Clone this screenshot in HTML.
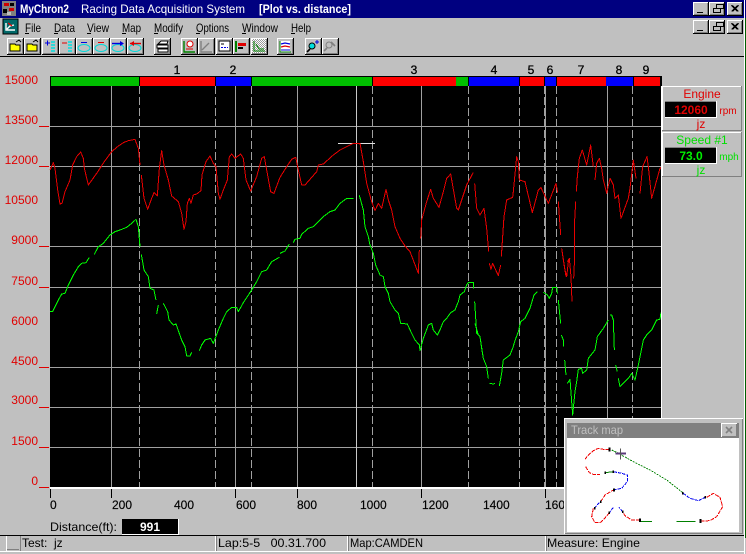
<!DOCTYPE html>
<html>
<head>
<meta charset="utf-8">
<style>
html,body{margin:0;padding:0;background:#c0c0c0;width:746px;height:554px;overflow:hidden}
svg{display:block;position:absolute;left:0;top:0}
text{font-family:"Liberation Sans",sans-serif}
</style>
</head>
<body>
<svg width="746" height="554" viewBox="0 0 746 554" xmlns="http://www.w3.org/2000/svg">
<defs>
<g id="b" shape-rendering="crispEdges"><rect width="17" height="17" fill="#000"/><rect width="16" height="16" fill="#fff"/><rect x="1" y="1" width="15" height="15" fill="#808080"/><rect x="1" y="1" width="14" height="14" fill="#c0c0c0"/></g>
<g id="w" shape-rendering="crispEdges"><rect width="16" height="14" fill="#000"/><rect width="15" height="13" fill="#fff"/><rect x="1" y="1" width="14" height="12" fill="#808080"/><rect x="1" y="1" width="13" height="11" fill="#c0c0c0"/></g>
<pattern id="dith" width="2" height="2" patternUnits="userSpaceOnUse"><rect width="2" height="2" fill="#fff"/><rect width="1" height="1" fill="#999"/><rect x="1" y="1" width="1" height="1" fill="#999"/></pattern>
</defs>

<rect width="746" height="554" fill="#c0c0c0"/>

<!-- title bar -->
<rect width="746" height="18" fill="#000080"/>
<rect x="2" y="1" width="14" height="15" fill="#808080"/>
<rect x="4" y="3" width="5" height="3" fill="#d00000"/><rect x="9" y="8" width="5" height="3" fill="#d00000"/><rect x="3" y="9" width="4" height="4" fill="#000"/><rect x="10" y="3" width="4" height="3" fill="#000"/><rect x="7" y="12" width="4" height="3" fill="#c0c0c0"/>
<g fill="#fff" font-size="12" font-weight="bold">
<text x="20" y="13" textLength="49" lengthAdjust="spacingAndGlyphs">MyChron2</text>
<text x="81" y="13" textLength="164" lengthAdjust="spacingAndGlyphs" font-weight="normal">Racing Data Acquisition System</text>
<text x="259" y="13" textLength="92" lengthAdjust="spacingAndGlyphs">[Plot vs. distance]</text>
</g>
<use href="#w" x="693" y="2"/><use href="#w" x="709" y="2"/><use href="#w" x="727" y="2"/>
<use href="#w" x="693" y="20"/><use href="#w" x="709" y="20"/><use href="#w" x="727" y="20"/>
<g shape-rendering="crispEdges" fill="none" stroke="#000">
<path d="M697 12.5h6M713.5 8.5h7v4h-7zM716.5 8v-3.5h7v4h-3M697 30.5h6M713.5 26.5h7v4h-7zM716.5 26v-3.5h7v4h-3"/>
<path d="M731.5 5.5l6 6M732.5 5.5l6 6M737.5 5.5l-6 6M738.5 5.5l-6 6M731.5 23.5l6 6M732.5 23.5l6 6M737.5 23.5l-6 6M738.5 23.5l-6 6"/>
</g>

<!-- menu bar -->
<rect x="3" y="19" width="15" height="15" fill="#006868" stroke="#000" stroke-width="1"/>
<path d="M6 23v7h9M7 29l3-3 4-1" fill="none" stroke="#fff" stroke-width="1.4"/><path d="M8 23l4 3" stroke="#e00000" stroke-width="1.2"/>
<g fill="#000" font-size="12">
<text x="25" y="32" textLength="16" lengthAdjust="spacingAndGlyphs">File</text>
<text x="54" y="32" textLength="21" lengthAdjust="spacingAndGlyphs">Data</text>
<text x="87" y="32" textLength="22" lengthAdjust="spacingAndGlyphs">View</text>
<text x="122" y="32" textLength="19" lengthAdjust="spacingAndGlyphs">Map</text>
<text x="154" y="32" textLength="29" lengthAdjust="spacingAndGlyphs">Modify</text>
<text x="196" y="32" textLength="33" lengthAdjust="spacingAndGlyphs">Options</text>
<text x="242" y="32" textLength="36" lengthAdjust="spacingAndGlyphs">Window</text>
<text x="291" y="32" textLength="20" lengthAdjust="spacingAndGlyphs">Help</text>
</g>
<g stroke="#000" shape-rendering="crispEdges"><path d="M25 33.5h4M54 33.5h4M87 33.5h4M122 33.5h4M154 33.5h4M196 33.5h4M242 33.5h4M291 33.5h4"/></g>

<!-- toolbar -->
<g>
<use href="#b" x="7" y="38"/><use href="#b" x="24" y="38"/><use href="#b" x="42" y="38"/><use href="#b" x="59" y="38"/><use href="#b" x="76" y="38"/><use href="#b" x="93" y="38"/><use href="#b" x="110" y="38"/><use href="#b" x="127" y="38"/>
<use href="#b" x="154" y="38"/>
<use href="#b" x="181" y="38"/><use href="#b" x="198" y="38"/><use href="#b" x="216" y="38"/><use href="#b" x="233" y="38"/><use href="#b" x="251" y="38"/>
<use href="#b" x="277" y="38"/>
<use href="#b" x="305" y="38"/><use href="#b" x="322" y="38"/>
</g>
<!-- open icons -->
<path d="M10 44h5l1 1h4v6H10z" fill="#ffff00" stroke="#000"/><path d="M27 44h5l1 1h4v6H27z" fill="#ffff00" stroke="#000"/>
<path d="M16 42l3-2 2 2M33 42l3-2 2 2" fill="none" stroke="#000"/>
<!-- add/remove lines -->
<path d="M45 43h5M47.5 40.5v5" stroke="#0000e0" stroke-width="1"/>
<path d="M62 43h5" stroke="#e00000" stroke-width="1"/>
<path d="M51 42h4M51 45h4M51 48h4M51 51h4M68 42h4M68 45h4M68 48h4M68 51h4" stroke="#00e0e0" stroke-width="1.6"/>
<!-- loops -->
<g fill="none" stroke="#00d8d8">
<ellipse cx="84" cy="48" rx="6" ry="3.5"/><ellipse cx="101" cy="48" rx="6" ry="3.5"/><ellipse cx="118" cy="48" rx="6" ry="3.5"/><ellipse cx="135" cy="48" rx="6" ry="3.5"/>
</g>
<path d="M81 42.5h6" stroke="#0000e0"/><path d="M98 42.5h6" stroke="#e00000"/>
<path d="M112 43.5h11" stroke="#0000e0" stroke-width="1.4"/><path d="M120 41l4 2.5-4 2.5z" fill="#0000e0"/>
<path d="M130 43.5h11" stroke="#e00000" stroke-width="1.4"/><path d="M134 41l-4 2.5 4 2.5z" fill="#e00000"/>
<!-- printer -->
<path d="M158 44l3-3h7l-1 3zM157 45h11v3h-11zM158 49h10v3h-10z" fill="#fff" stroke="#000"/>
<!-- chart buttons -->
<path d="M184 41v11h11" fill="none" stroke="#008000" stroke-width="1.4"/><circle cx="190" cy="44" r="3" fill="#fff" stroke="#e00000"/><path d="M186 49h7" stroke="#e00000"/>
<path d="M201 41v11h11M202 50l7-7" fill="none" stroke="#808080" stroke-width="1.4"/>
<rect x="219" y="41" width="11" height="10" fill="#fff" stroke="#000"/><path d="M221 47.5h7" stroke="#0000e0" stroke-dasharray="2 1"/><path d="M221 44h3" stroke="#000"/>
<path d="M236 41v11" stroke="#008000" stroke-width="2"/><rect x="238" y="43" width="8" height="3" fill="#e00000"/><rect x="238" y="47" width="5" height="2" fill="#000"/>
<rect x="252" y="39" width="14" height="14" fill="url(#dith)"/><path d="M254 41v10h11M256 44l3 5h5" fill="none" stroke="#008000"/>
<path d="M280 41h10v11h-10z" fill="#fff"/><path d="M280 41v11h11" fill="none" stroke="#008000"/><path d="M281 44l4-1 5 1" fill="none" stroke="#0000e0" stroke-width="1.2"/><path d="M281 47l4-1 5 1" fill="none" stroke="#e00000" stroke-width="1.2"/><path d="M281 50h9" stroke="#0000e0"/>
<circle cx="312" cy="46" r="3" fill="#00e0e0" stroke="#000"/><path d="M310 49l-3 3" stroke="#000" stroke-width="1.6"/><path d="M315 42h4M317 40v4" stroke="#0000e0"/>
<circle cx="329" cy="45" r="3" fill="none" stroke="#808080"/><path d="M327 48l-3 3M331 42l4 4" stroke="#808080" stroke-width="1.6"/>

<!-- separator -->
<rect x="0" y="56" width="744" height="1" fill="#000"/>

<!-- colour bar -->
<g shape-rendering="crispEdges">
<rect x="50" y="76" width="612" height="11" fill="#000"/>
<rect x="51" y="77" width="88" height="9" fill="#00c000"/>
<rect x="140" y="77" width="75" height="9" fill="#ff0000"/>
<rect x="216" y="77" width="35" height="9" fill="#0000ff"/>
<rect x="252" y="77" width="120" height="9" fill="#00c000"/>
<rect x="373" y="77" width="83" height="9" fill="#ff0000"/>
<rect x="456" y="77" width="12" height="9" fill="#00c000"/>
<rect x="469" y="77" width="50" height="9" fill="#0000ff"/>
<rect x="520" y="77" width="24" height="9" fill="#ff0000"/>
<rect x="545" y="77" width="11" height="9" fill="#0000ff"/>
<rect x="557" y="77" width="49" height="9" fill="#ff0000"/>
<rect x="606" y="77" width="27" height="9" fill="#0000ff"/>
<rect x="634" y="77" width="26" height="9" fill="#ff0000"/>
</g>
<g font-size="12" fill="#000" text-anchor="middle" stroke="#000" stroke-width=".3">
<text x="177" y="74">1</text><text x="233" y="74">2</text><text x="414" y="74">3</text><text x="494" y="74">4</text><text x="531" y="74">5</text><text x="550" y="74">6</text><text x="581" y="74">7</text><text x="619" y="74">8</text><text x="646" y="74">9</text>
</g>

<!-- chart area -->
<rect x="50" y="86" width="611" height="401" fill="#000" shape-rendering="crispEdges"/>
<g stroke="#a0a0a0" stroke-width="1" shape-rendering="crispEdges">
<path d="M50 126.5h611M50 166.5h611M50 246.5h611M50 287.5h611M50 367.5h611M50 407.5h611M50 447.5h611"/>
<path d="M111.5 86v401M235.5 86v401M297.5 86v401M356.5 86v401M421.5 86v401M545.5 86v401M607.5 86v401"/>
<path stroke-dasharray="8 3" d="M139.5 86v401M215.5 86v401M251.5 86v401M372.5 86v401M468.5 86v401M519.5 86v401M544.5 86v401M556.5 86v401M632.5 86v401"/>
</g>
<path d="M338 143.5h37" stroke="#e0e0e0" shape-rendering="crispEdges"/>
<path d="M356.5 86v401" stroke="#c8c8c8" shape-rendering="crispEdges"/>

<!-- traces -->
<g fill="none" stroke-width="3" shape-rendering="crispEdges" stroke-linejoin="round">
<g transform="translate(0,120) scale(.33333)">
<path stroke="#e80000" d="M150 150L160 128L165 145L170 185L173 210L180 252L186 250L195 215L210 180L218 135L230 110L242 96L250 115L253 145L265 195L290 160L315 122L335 95L355 78L370 68L385 62L405 58L415 85L420 135M424 165L432 235L443 268L455 235L462 218L472 228L478 145L485 92L492 135L505 180L515 228L535 245L545 280L552 328L558 305L562 250L568 235L573 250L580 225L590 222L603 212L606 165L618 125L630 108L640 130L648 140L655 220L660 238L670 210L682 180L688 110L695 102L705 115L722 102L730 115L738 180L752 213L770 170L785 115L793 110L800 150L812 215L822 220L840 172"/>
<path stroke="#00ff00" d="M150 574L158 574L175 540L185 522L195 520L205 495L220 465L235 440L245 430L258 428L268 412M283 403L295 380L310 370L330 345L345 335L360 330L380 322L395 310L408 298L415 320L420 380M424 403L432 450L445 470L450 505L462 510L468 540M470 582L475 555M490 550L503 575L507 600L520 615L528 612L545 660L555 680L560 708L570 708L575 697M598 692L605 675L615 660L632 655L640 670L655 630L670 595L680 575L695 562L710 562L715 575L730 548L755 510L770 485L785 455L800 450L815 425L838 412"/>
</g>
<g transform="translate(280,120) scale(.33333)">
<path stroke="#e80000" d="M0 172L20 140L35 118L47 112L55 150L65 195L75 195L110 155L115 135L130 132L160 105L180 90L220 70L240 70L250 125L260 190L275 245L285 272L295 250L305 265L318 208L325 240L335 270L345 320L360 355L375 378L390 395L415 460L418 390M422 355L425 300L440 245L452 208L460 235L477 262L490 215L500 175L512 162L530 265L535 270L560 195L580 157M584 190L590 265L600 285L612 265L620 325L626 395M628 430L633 448L638 430L655 467L662 435M664 410L672 290L680 240L698 232L700 215L710 110L715 125L718 180L735 185L757 278L775 210L783 203L805 250L828 190L833 218M835 245L842 345M845 385L855 450L860 470L865 425L870 415"/>
<path stroke="#00ff00" d="M0 400L15 393L28 372M40 368L45 358L60 355L65 343L85 325L100 320L115 305L130 290L150 275L165 270L180 250L200 235L220 235M238 226L250 270L255 320L265 350L270 375L280 400L287 435L300 465L310 470L315 500L325 520L330 545L345 570L355 580L362 610L382 612L395 640L405 660L418 675L420 692L430 655L445 615L455 610L460 630L472 645L482 625L490 605L500 595L512 578L525 570L535 545L540 525L553 515L560 495L565 487L580 487L580 505M584 545L590 640L600 650L610 715"/>
</g>
<g transform="translate(460,130) scale(.33333)">
<path stroke="#e80000" d="M305 355L310 390L318 440M322 395L328 385L333 440L336 515M341 445L344 380L343 290L347 215M349 185L352 140L358 85L367 60L380 105L392 45L400 110M405 150L410 100L418 85L425 115L430 150L440 190L450 145L460 165L465 205L475 195L483 265L505 205L510 175L520 90L528 145M540 190L548 110L561 80L565 110L575 205L600 115L603 112"/>
<path stroke="#00ff00" d="M85 745M88 760L100 762L105 760M118 768L125 730L130 690L150 675L158 655L165 632L175 605L182 575L195 565L210 535L222 495L232 485M250 487L262 495L268 505L275 490L278 472L290 472L292 490M295 510L302 580M304 615L310 630L310 650M314 690L318 735M322 760L330 748L338 855L345 785L350 755L355 718L365 715L368 730L380 720L385 685L405 660L412 620L430 595L445 570M450 555L455 555L460 570L463 660M467 705L472 725M475 745L480 770L495 755L505 745L515 730L525 750L535 705L550 630L560 615L575 600L590 570L600 568L603 547"/>
<path stroke="#00ff00" d="M45 580L55 615L60 620L65 655L70 685L80 710L85 745"/>
</g>
</g>

<!-- y labels -->
<g fill="#e00000" font-size="12" text-anchor="end">
<text x="38" y="84">15000</text><text x="38" y="124">13500</text><text x="38" y="164">12000</text><text x="38" y="204">10500</text><text x="38" y="244">9000</text><text x="38" y="285">7500</text><text x="38" y="325">6000</text><text x="38" y="365">4500</text><text x="38" y="404">3000</text><text x="38" y="445">1500</text><text x="38" y="485">0</text>
</g>
<path d="M39 126.5h10M39 166.5h10M39 246.5h10M39 287.5h10M39 367.5h10M39 407.5h10M39 447.5h10M39 487.5h10" stroke="#e00000" shape-rendering="crispEdges"/>

<!-- x axis -->
<rect x="50" y="487" width="612" height="2" fill="#fff" shape-rendering="crispEdges"/>
<path d="M50.5 489v9M111.5 489v9M235.5 489v9M297.5 489v9M421.5 489v9M545.5 489v9" stroke="#000" shape-rendering="crispEdges"/>
<g fill="#000" font-size="12" stroke="#000" stroke-width=".15">
<text x="50" y="509">0</text><text x="112" y="509">200</text><text x="174" y="509">400</text><text x="236" y="509">600</text><text x="297" y="509">800</text><text x="360" y="509">1000</text><text x="422" y="509">1200</text><text x="483" y="509">1400</text><text x="545" y="509">160</text>
</g>
<text x="50" y="531" fill="#000" font-size="12" textLength="67" lengthAdjust="spacingAndGlyphs">Distance(ft):</text>
<rect x="122" y="519" width="57" height="16" fill="#fff" shape-rendering="crispEdges"/>
<rect x="122" y="519" width="56" height="15" fill="#000" shape-rendering="crispEdges"/>
<text x="150" y="531" fill="#fff" font-size="12" text-anchor="middle" font-weight="bold">991</text>

<!-- right panels -->
<rect x="661" y="86" width="1" height="340" fill="#fff"/>
<g shape-rendering="crispEdges">
<rect x="662" y="86" width="80" height="45" fill="#808080"/><rect x="662" y="86" width="79" height="44" fill="#fff"/><rect x="663" y="87" width="78" height="43" fill="#c0c0c0"/>
<rect x="662" y="132" width="80" height="45" fill="#808080"/><rect x="662" y="132" width="79" height="44" fill="#fff"/><rect x="663" y="133" width="78" height="43" fill="#c0c0c0"/>
<rect x="665" y="101" width="52" height="17" fill="#fff"/><rect x="665" y="101" width="51" height="16" fill="#000"/><rect x="665" y="101" width="51" height="1" fill="#808080"/>
<rect x="665" y="147" width="52" height="17" fill="#fff"/><rect x="665" y="147" width="51" height="16" fill="#000"/><rect x="665" y="147" width="51" height="1" fill="#808080"/>
</g>
<g font-size="12" text-anchor="middle">
<text x="702" y="98" fill="#e00000">Engine</text>
<text x="691" y="114" fill="#e00000" font-weight="bold">12060</text>
<text x="728" y="114" fill="#e00000" font-size="10">rpm</text>
<text x="701" y="128" fill="#e00000">jz</text>
<text x="702" y="144" fill="#00e000">Speed #1</text>
<text x="691" y="160" fill="#00f000" font-weight="bold">73.0</text>
<text x="729" y="160" fill="#00e000" font-size="10">mph</text>
<text x="701" y="174" fill="#00e000">jz</text>
</g>

<!-- status bar -->
<rect x="0" y="535" width="744" height="1" fill="#000"/>
<rect x="0" y="551" width="744" height="1" fill="#fff"/>
<g stroke="#fff" shape-rendering="crispEdges"><path d="M6.5 536v15M215.5 536v15M347.5 536v15M545.5 536v15"/></g>
<g stroke="#808080" shape-rendering="crispEdges"><path d="M20.5 536v15M216.5 536v15M348.5 536v15M546.5 536v15M7 549.5h12"/></g>
<g font-size="12" fill="#000">
<text x="22" y="547" xml:space="preserve">Test:  jz</text>
<text x="218" y="547" textLength="108" lengthAdjust="spacingAndGlyphs" xml:space="preserve">Lap:5-5   00.31.700</text>
<text x="350" y="547" textLength="73" lengthAdjust="spacingAndGlyphs">Map:CAMDEN</text>
<text x="547" y="547" textLength="93" lengthAdjust="spacingAndGlyphs">Measure: Engine</text>
</g>

<!-- track map window -->
<g shape-rendering="crispEdges">
<rect x="564" y="418" width="180" height="117" fill="#c0c0c0"/>
<rect x="564" y="418" width="179" height="116" fill="#fff"/>
<rect x="565" y="419" width="178" height="115" fill="#808080"/>
<rect x="565" y="419" width="177" height="114" fill="#c0c0c0"/>
<rect x="567" y="423" width="172" height="15" fill="#808080"/>
<rect x="567" y="438" width="172" height="94" fill="#fff"/>
<rect x="721" y="423" width="16" height="14" fill="#fff"/><rect x="722" y="424" width="15" height="13" fill="#808080"/><rect x="722" y="424" width="14" height="12" fill="#c0c0c0"/>
</g>
<path d="M726 427l6 6M732 427l-6 6" stroke="#808080" stroke-width="1.6"/>
<text x="571" y="434" fill="#c0c0c0" font-size="12" textLength="52" lengthAdjust="spacingAndGlyphs">Track map</text>
<g transform="translate(550,410) scale(.33333)" fill="none" stroke-width="3" shape-rendering="crispEdges">
<path stroke="#f00000" stroke-dasharray="12 3" d="M178 118L160 118L145 115L130 122L115 135L105 148M107 170L118 188L130 193L150 193M470 262L490 250L510 262L518 290L500 320L480 332L455 333M270 330L245 330L225 317L218 305M178 308L160 330L150 338L135 338L125 320L130 295M152 275L165 255L190 240"/>
<path stroke="#008000" stroke-dasharray="6 3" d="M185 120L205 130L250 155L300 180L350 210L398 248"/>
<path stroke="#008000" d="M380 334L437 334M272 334L306 334M165 188L190 185"/>
<path stroke="#0000f0" stroke-dasharray="10 3" d="M400 250L420 265L445 272L465 262M218 305L207 292M190 292L178 308M133 295L150 275M190 240L215 235L232 215L232 195L215 190L190 185"/>
<path stroke="#000" stroke-width="6" d="M178 112L178 124M452 327L452 339"/>
<path stroke="#000" stroke-width="5" d="M166 184v8M190 181v8M192 236v8M152 271v8M134 291v8M178 304v8M218 301v8M270 326v10M398 246v8M466 258v8"/>
<path stroke="#5a3a7a" stroke-width="6" d="M196 131L228 131"/>
<path stroke="#555" stroke-width="3" d="M212 115L212 149"/>
</g>

<!-- right edge -->
<rect x="744" y="0" width="1" height="554" fill="#fff"/>
<rect x="745" y="18" width="1" height="520" fill="#006000"/>
</svg>
</body>
</html>
